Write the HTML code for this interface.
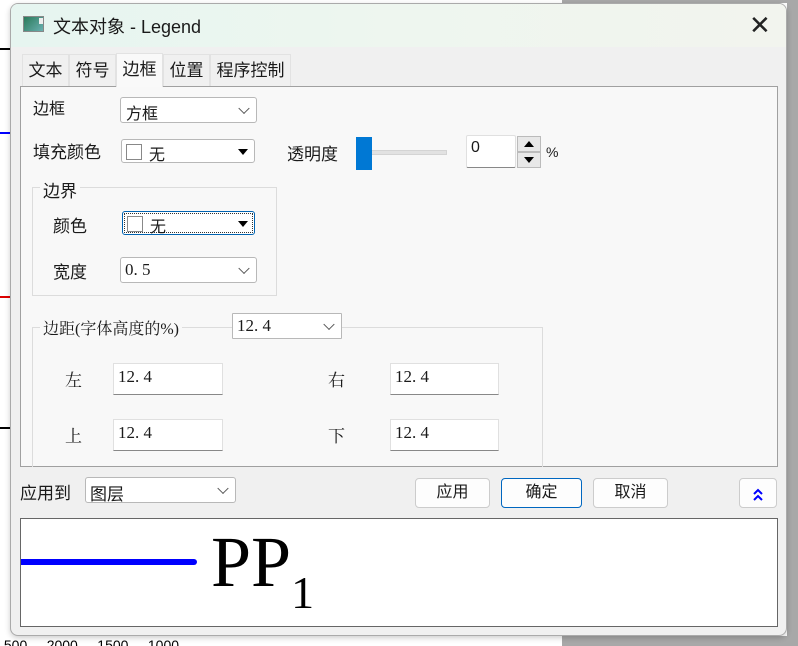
<!DOCTYPE html>
<html><head><meta charset="utf-8"><style>
*{margin:0;padding:0;box-sizing:border-box}
body{width:798px;height:646px;position:relative;overflow:hidden;background:#fff;font-family:"Liberation Sans","Noto Sans CJK SC",sans-serif;font-size:16px;color:#1a1a1a}
.a{position:absolute}
.serif{font-family:"Liberation Serif","Noto Serif CJK SC",serif}
.dd{position:absolute;background:#fff;border:1px solid #b8b8b8;border-radius:3px}
.chev{position:absolute;right:8px;top:50%;width:8px;height:8px;border-right:1.3px solid #555;border-bottom:1.3px solid #555;transform:translateY(-70%) rotate(45deg)}
.tri{position:absolute;right:6px;top:50%;margin-top:-2px;border-left:5px solid transparent;border-right:5px solid transparent;border-top:6px solid #000}
.tb{position:absolute;background:#fff;border:1px solid #e0e0e0;border-bottom:1px solid #888}
.btn{position:absolute;background:#fdfdfd;border:1px solid #ccc;border-radius:4px;text-align:center;line-height:27px}
.tab{position:absolute;top:54px;height:32px;line-height:32px;text-align:center;font-size:17px;border:1px solid #e2e2e2;border-bottom:none;background:#f0f0f0}
</style></head><body>
<div class="a" style="left:0;top:48px;width:10px;height:2px;background:#000"></div>
<div class="a" style="left:0;top:132px;width:10px;height:2px;background:#00f"></div>
<div class="a" style="left:0;top:296px;width:10px;height:2px;background:#d00"></div>
<div class="a" style="left:0;top:427px;width:10px;height:2px;background:#000"></div>
<div class="a" style="left:562px;top:0;width:236px;height:3px;background:#a8a8a8"></div>
<div class="a" style="left:787px;top:0;width:11px;height:646px;background:#a8a8a8"></div>
<div class="a" style="left:562px;top:636px;width:236px;height:10px;background:#a8a8a8"></div>
<div class="a" style="left:0;top:636px;width:562px;height:10px;background:#fff;color:#000;font-size:14px;line-height:18px;overflow:hidden">&nbsp;500&nbsp;&nbsp;&nbsp;&nbsp;&nbsp;2000&nbsp;&nbsp;&nbsp;&nbsp;&nbsp;1500&nbsp;&nbsp;&nbsp;&nbsp;&nbsp;1000</div>
<div class="a" style="left:10px;top:3px;width:777px;height:633px;background:#f0f0f0;border:1px solid #aaa;border-radius:8px;overflow:hidden;box-shadow:0 2px 6px rgba(0,0,0,.2)">
 <div class="a" style="left:0;top:0;width:777px;height:43px;background:linear-gradient(90deg,#e6f5f0,#eef6ef,#f2f4ee)"></div>
 <div class="a" style="left:12px;top:12px;width:21px;height:16px;border:1px solid #888;background:linear-gradient(135deg,#2a7a5a,#6ab0b0);"></div>
 <div class="a" style="left:28px;top:14px;width:4px;height:6px;background:#eee"></div>
 <div class="a" style="left:42px;top:9px;font-size:18px">文本对象 - Legend</div>
 <div class="a" style="left:738px;top:6px;font-size:26px;font-weight:200;color:#222">✕</div>
</div>
<div class="tab" style="left:22px;width:47px">文本</div>
<div class="tab" style="left:69px;width:47px">符号</div>
<div class="tab" style="left:116px;top:53px;height:34px;width:47px;background:#f9f9f9;z-index:2">边框</div>
<div class="tab" style="left:163px;width:47px">位置</div>
<div class="tab" style="left:210px;width:81px">程序控制</div>
<div class="a" style="left:20px;top:86px;width:758px;height:381px;background:#f8f8f8;border:1px solid #a0a0a0"></div>
<div class="a" style="left:33px;top:95px">边框</div>
<div class="dd" style="left:120px;top:97px;width:137px;height:26px"><span class="a" style="left:5px;top:2px;font-size:16px">方框</span><div class="chev"></div></div>
<div class="a" style="left:33px;top:138px;font-size:17px">填充颜色</div>
<div class="dd" style="left:121px;top:139px;width:134px;height:24px"><div class="a" style="left:4px;top:4px;width:16px;height:16px;border:1px solid #888"></div><span class="a" style="left:27px;top:1px">无</span><div class="tri"></div></div>
<div class="a" style="left:287px;top:140px;font-size:17px">透明度</div>
<div class="a" style="left:370px;top:150px;width:77px;height:5px;background:#e2e2e2;border:1px solid #d4d4d4"></div>
<div class="a" style="left:356px;top:137px;width:16px;height:33px;background:#0078d4"></div>
<div class="tb" style="left:466px;top:135px;width:50px;height:33px;border-radius:2px"><span class="a" style="left:4px;top:3px">0</span></div>
<div class="a" style="left:517px;top:136px;width:24px;height:16px;background:#e8e8e8;border:1px solid #bbb"><div class="a" style="left:6px;top:4px;border-left:5px solid transparent;border-right:5px solid transparent;border-bottom:6px solid #000"></div></div>
<div class="a" style="left:517px;top:152px;width:24px;height:16px;background:#e8e8e8;border:1px solid #bbb"><div class="a" style="left:6px;top:4px;border-left:5px solid transparent;border-right:5px solid transparent;border-top:6px solid #000"></div></div>
<div class="a" style="left:546px;top:144px;font-size:14px">%</div>
<div class="a" style="left:32px;top:187px;width:245px;height:109px;border:1px solid #dcdcdc"></div>
<div class="a" style="left:40px;top:177px;background:#f8f8f8;padding:0 3px;font-size:17px">边界</div>
<div class="a" style="left:53px;top:212px;font-size:17px">颜色</div>
<div class="dd" style="left:122px;top:211px;width:133px;height:24px;border:1px solid #0063b1"><div class="a" style="left:1px;top:1px;right:1px;bottom:1px;border:1px dotted #333"></div><div class="a" style="left:4px;top:4px;width:16px;height:16px;border:1px solid #888"></div><span class="a" style="left:27px;top:1px">无</span><div class="tri"></div></div>
<div class="a" style="left:53px;top:258px;font-size:17px">宽度</div>
<div class="dd serif" style="left:120px;top:257px;width:137px;height:26px"><span class="a" style="left:4px;top:2px;font-size:17px">0. 5</span><div class="chev"></div></div>
<div class="a" style="left:32px;top:327px;width:511px;height:140px;border:1px solid #dcdcdc;border-bottom:none"></div>
<div class="a serif" style="left:40px;top:316px;background:#f8f8f8;padding:0 3px;font-size:16px">边距(字体高度的%)</div>
<div class="dd serif" style="left:232px;top:313px;width:110px;height:26px;border-radius:1px"><span class="a" style="left:4px;top:2px;font-size:17px">12. 4</span><div class="chev"></div></div>
<div class="a serif" style="left:65px;top:366px;font-size:17px">左</div>
<div class="tb serif" style="left:113px;top:363px;width:110px;height:32px"><span class="a" style="left:4px;top:3px;font-size:17px">12. 4</span></div>
<div class="a serif" style="left:65px;top:422px;font-size:17px">上</div>
<div class="tb serif" style="left:113px;top:419px;width:110px;height:32px"><span class="a" style="left:4px;top:3px;font-size:17px">12. 4</span></div>
<div class="a serif" style="left:328px;top:366px;font-size:17px">右</div>
<div class="tb serif" style="left:390px;top:363px;width:109px;height:32px"><span class="a" style="left:4px;top:3px;font-size:17px">12. 4</span></div>
<div class="a serif" style="left:328px;top:422px;font-size:17px">下</div>
<div class="tb serif" style="left:390px;top:419px;width:109px;height:32px"><span class="a" style="left:4px;top:3px;font-size:17px">12. 4</span></div>
<div class="a" style="left:20px;top:479px;font-size:17px">应用到</div>
<div class="dd" style="left:85px;top:477px;width:151px;height:26px"><span class="a" style="left:4px;top:2px;font-size:17px">图层</span><div class="chev"></div></div>
<div class="btn" style="left:415px;top:478px;width:75px;height:30px">应用</div>
<div class="btn" style="left:501px;top:478px;width:81px;height:30px;border-color:#0067c0">确定</div>
<div class="btn" style="left:593px;top:478px;width:75px;height:30px">取消</div>
<div class="btn" style="left:739px;top:478px;width:38px;height:30px"><svg width="14" height="16" viewBox="0 0 14 16" style="margin-top:7px"><path d="M3 8 L7 4 L11 8 M3 14 L7 10 L11 14" fill="none" stroke="#00f" stroke-width="2"/></svg></div>
<div class="a" style="left:20px;top:518px;width:758px;height:109px;background:#fff;border:1px solid #666"></div>
<div class="a" style="left:21px;top:559px;width:176px;height:6px;background:#00f;border-radius:0 3px 3px 0"></div>
<div class="a" style="left:211px;top:522px;font-family:'Liberation Serif',serif;font-size:72px;line-height:80px;color:#000">PP<span style="font-size:46px;position:relative;top:22px">1</span></div>
</body></html>
